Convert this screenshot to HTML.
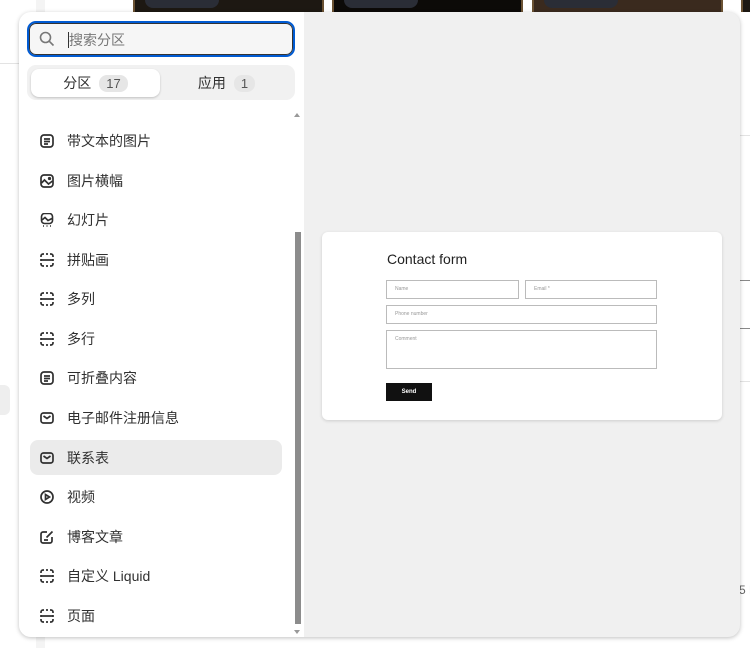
<!DOCTYPE html>
<html><head><meta charset="utf-8"><style>
*{box-sizing:border-box;margin:0;padding:0}
body{width:750px;height:648px;overflow:hidden;background:#fff;position:relative;font-family:"Liberation Sans","Noto Sans CJK SC",sans-serif;color:#303030}
.img{position:absolute;top:0;height:12px;background:#1d1812;border-left:2px solid #6b5233;border-right:2px solid #6b5233}
.pill{position:absolute;top:-8px;left:10px;width:74px;height:16px;border-radius:8px;background:#2a2d36}
.panel{position:absolute;left:19px;top:12px;width:721px;height:625px;border-radius:12px;background:#f0f0f0;overflow:hidden;box-shadow:0 1px 4px rgba(0,0,0,.25)}
.left{position:absolute;left:0;top:0;width:285px;height:625px;background:#fff}
.search{position:absolute;left:8px;top:9px;width:268px;height:36px;border:2px solid #005bd3;border-radius:9px;background:#f6f6f6;box-shadow:inset 0 0 0 1px #333}
.search span{position:absolute;left:40px;top:7px;font-size:14px;color:#777}
.search span:before{content:"";position:absolute;left:-1px;top:2px;width:1px;height:16px;background:#333}
.tabs{position:absolute;left:8px;top:53px;width:268px;height:35px;border-radius:9px;background:#f1f1f1}
.tab{position:absolute;top:4px;height:28px;width:129px;font-size:14px;display:flex;align-items:center;justify-content:center;gap:8px}
.tab.a{left:4px;background:#fff;border-radius:8px;box-shadow:0 1px 2px rgba(0,0,0,.2)}
.badge{background:#e6e6e6;border-radius:8px;padding:1px 7px;font-size:13px;color:#555}
.item{position:absolute;left:11px;width:252px;height:35px;display:flex;align-items:center;font-size:14px;border-radius:8px}
.item svg{margin-left:10px;margin-right:13px}
.sel{background:#ebebeb}
.sb{position:absolute;left:276px;top:220px;width:6px;height:392px;background:#8c8c8c}
.card{position:absolute;left:303px;top:220px;width:400px;height:188px;background:#fff;border-radius:6px;box-shadow:0 1px 3px rgba(0,0,0,.15)}
.f{position:absolute;border:1px solid #bbb;font-size:5px;color:#999;padding:5px 8px;font-family:"Liberation Sans",sans-serif}
</style></head><body>
<div style="position:absolute;left:0;top:63px;width:36px;height:1px;background:#e3e3e3"></div>
<div style="position:absolute;left:36px;top:0;width:9px;height:648px;background:#f4f4f4"></div>
<div style="position:absolute;left:0;top:385px;width:10px;height:30px;background:#eee;border-radius:0 6px 6px 0"></div>
<div class="img" style="left:133px;width:191px"><div class="pill"></div></div>
<div class="img" style="left:332px;width:191px;background:#0c0a08"><div class="pill"></div></div>
<div class="img" style="left:532px;width:191px;background:#3a2a1e"><div class="pill"></div></div>
<div class="img" style="left:741px;width:12px"></div>
<div style="position:absolute;left:740px;top:135px;width:10px;height:1px;background:#e3e3e3"></div>
<div style="position:absolute;left:740px;top:280px;width:10px;height:1px;background:#888"></div>
<div style="position:absolute;left:740px;top:328px;width:10px;height:1px;background:#888"></div>
<div style="position:absolute;left:740px;top:381px;width:10px;height:1px;background:#e3e3e3"></div>
<div style="position:absolute;left:739px;top:583px;font-size:12px;color:#666;white-space:nowrap">5 P</div>
<div class="panel">
<div class="left">
<div class="search"><svg style="position:absolute;left:10px;top:8px" width="16" height="16" viewBox="0 0 16 16"><circle cx="6.5" cy="6.5" r="5" fill="none" stroke="#777" stroke-width="1.6"/><path d="M10.2 10.2L14.5 14.5" stroke="#777" stroke-width="1.6"/></svg><span>搜索分区</span></div>
<div class="tabs"><div class="tab a">分区<span class="badge">17</span></div><div class="tab" style="left:135px">应用<span class="badge">1</span></div></div>
<div style="position:absolute;left:275px;top:101px;width:0;height:0;border-left:3px solid transparent;border-right:3px solid transparent;border-bottom:4px solid #999"></div>
<div style="position:absolute;left:275px;top:618px;width:0;height:0;border-left:3px solid transparent;border-right:3px solid transparent;border-top:4px solid #999"></div>
<div class="sb"></div>
<div class="item" style="top:111px"><svg width="14" height="14" viewBox="0 0 14 14" fill="none" stroke="#303030" stroke-width="1.7"><rect x="1" y="1" width="12" height="12" rx="3"/><path d="M4 5h6M4 7.5h6M4 10h4"/></svg>带文本的图片</div>
<div class="item" style="top:151px"><svg width="14" height="14" viewBox="0 0 14 14" fill="none" stroke="#303030" stroke-width="1.7"><rect x="1" y="1" width="12" height="12" rx="3"/><path d="M1.5 9l3-3 4 4 4-3"/><circle cx="9.5" cy="4.5" r=".8" fill="#303030"/></svg>图片横幅</div>
<div class="item" style="top:190px"><svg width="14" height="14" viewBox="0 0 14 14" fill="none" stroke="#303030" stroke-width="1.6"><rect x="1.5" y="0.5" width="11" height="10" rx="3"/><path d="M2 7l3-2.5 3 3 4-2"/><path d="M3 13h1M6.5 13h1M10 13h1" stroke-width="1.6"/></svg>幻灯片</div>
<div class="item" style="top:230px"><svg width="14" height="14" viewBox="0 0 14 14" fill="none" stroke="#303030" stroke-width="1.7"><path d="M1 4V3a2 2 0 012-2h1M6 1h2M10 1h1a2 2 0 012 2v1M13 6v2M13 10v1a2 2 0 01-2 2h-1M8 13H6M4 13H3a2 2 0 01-2-2v-1M1 8V6M1 7h12"/></svg>拼贴画</div>
<div class="item" style="top:269px"><svg width="14" height="14" viewBox="0 0 14 14" fill="none" stroke="#303030" stroke-width="1.7"><path d="M1 4V3a2 2 0 012-2h1M6 1h2M10 1h1a2 2 0 012 2v1M13 6v2M13 10v1a2 2 0 01-2 2h-1M8 13H6M4 13H3a2 2 0 01-2-2v-1M1 8V6M1 7h12"/></svg>多列</div>
<div class="item" style="top:309px"><svg width="14" height="14" viewBox="0 0 14 14" fill="none" stroke="#303030" stroke-width="1.7"><path d="M1 4V3a2 2 0 012-2h1M6 1h2M10 1h1a2 2 0 012 2v1M13 6v2M13 10v1a2 2 0 01-2 2h-1M8 13H6M4 13H3a2 2 0 01-2-2v-1M1 8V6M1 7h12"/></svg>多行</div>
<div class="item" style="top:348px"><svg width="14" height="14" viewBox="0 0 14 14" fill="none" stroke="#303030" stroke-width="1.7"><rect x="1" y="1" width="12" height="12" rx="3"/><path d="M4 5h6M4 7.5h6M4 10h4"/></svg>可折叠内容</div>
<div class="item" style="top:388px"><svg width="14" height="14" viewBox="0 0 14 14" fill="none" stroke="#303030" stroke-width="1.7"><rect x="1" y="2" width="12" height="10" rx="2.5"/><path d="M3.5 5l3.5 2.5 3.5-2.5"/></svg>电子邮件注册信息</div>
<div class="item sel" style="top:428px"><svg width="14" height="14" viewBox="0 0 14 14" fill="none" stroke="#303030" stroke-width="1.7"><rect x="1" y="2" width="12" height="10" rx="2.5"/><path d="M3.5 5l3.5 2.5 3.5-2.5"/></svg>联系表</div>
<div class="item" style="top:467px"><svg width="14" height="14" viewBox="0 0 14 14" fill="none" stroke="#303030" stroke-width="1.7"><circle cx="7" cy="7" r="6"/><path d="M5.5 4.5v5l4-2.5z"/></svg>视频</div>
<div class="item" style="top:507px"><svg width="14" height="14" viewBox="0 0 14 14" fill="none" stroke="#303030" stroke-width="1.7"><path d="M7 2H3a2 2 0 00-2 2v7a2 2 0 002 2h7a2 2 0 002-2V7"/><path d="M4 10h4M6.5 7.5L12.5 1.5"/></svg>博客文章</div>
<div class="item" style="top:546px"><svg width="14" height="14" viewBox="0 0 14 14" fill="none" stroke="#303030" stroke-width="1.7"><path d="M1 4V3a2 2 0 012-2h1M6 1h2M10 1h1a2 2 0 012 2v1M13 6v2M13 10v1a2 2 0 01-2 2h-1M8 13H6M4 13H3a2 2 0 01-2-2v-1M1 8V6M1 7h12"/></svg>自定义 Liquid</div>
<div class="item" style="top:586px"><svg width="14" height="14" viewBox="0 0 14 14" fill="none" stroke="#303030" stroke-width="1.7"><path d="M1 4V3a2 2 0 012-2h1M6 1h2M10 1h1a2 2 0 012 2v1M13 6v2M13 10v1a2 2 0 01-2 2h-1M8 13H6M4 13H3a2 2 0 01-2-2v-1M1 8V6M1 7h12"/></svg>页面</div>
</div>
<div class="card">
<div style="position:absolute;left:65px;top:19px;font-size:14px;color:#222">Contact form</div>
<div class="f" style="left:64px;top:48px;width:133px;height:19px">Name</div>
<div class="f" style="left:203px;top:48px;width:132px;height:19px">Email *</div>
<div class="f" style="left:64px;top:73px;width:271px;height:19px">Phone number</div>
<div class="f" style="left:64px;top:98px;width:271px;height:39px">Comment</div>
<div style="position:absolute;left:64px;top:151px;width:46px;height:18px;background:#111;color:#fff;font-size:6px;font-weight:bold;display:flex;align-items:center;justify-content:center">Send</div>
</div>
</div>
</body></html>
